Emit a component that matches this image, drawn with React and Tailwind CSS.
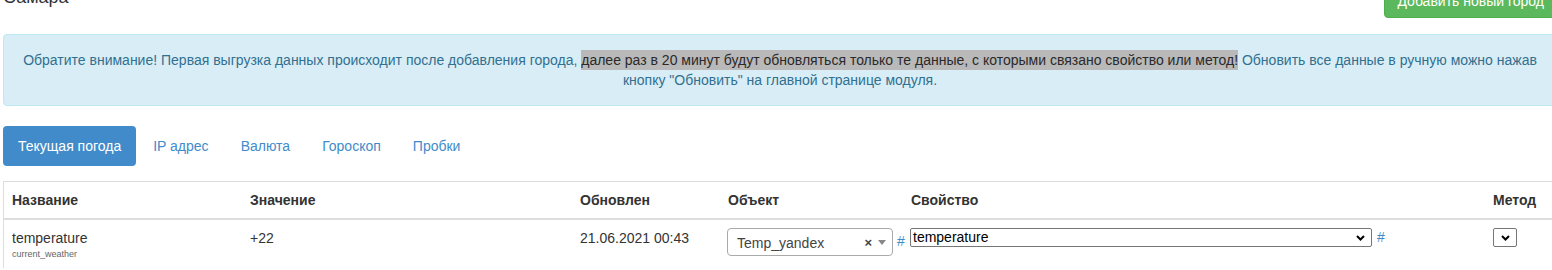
export default function App() {
  const cols = "grid grid-cols-[238px_330px_148px_183px_582px_1fr]";
  return (
    <div className="w-[1552px] h-[270px] overflow-hidden bg-white font-['Liberation_Sans',Arial,sans-serif] text-[14px] leading-[20px] text-[#333]">
      <div className="ml-[3px] w-[1554px]">
        {/* header row */}
        <div className="-mt-[16px] flex h-[34px] items-start justify-between">
          <h3 className="mt-[3px] text-[18px] leading-[20px] font-normal text-[#333]">Самара</h3>
          <button className="h-[34px] rounded-[4px] border border-[#4cae4c] bg-[#5cb85c] px-[12px] text-[14px] leading-[20px] text-white">
            Добавить новый город
          </button>
        </div>

        {/* alert */}
        <div className="mt-[16px] rounded-[4px] border border-[#bce8f1] bg-[#d9edf7] p-[15px] text-center text-[#31708f]">
          Обратите внимание! Первая выгрузка данных происходит после добавления города,{" "}
          <span className="bg-[#b9b9b9] py-[2px] text-[#2a2a2a]">
            далее раз в 20 минут будут обновляться только те данные, с которыми связано свойство или метод!
          </span>{" "}
          Обновить все данные в ручную можно нажав кнопку "Обновить" на главной странице модуля.
        </div>

        {/* tabs */}
        <ul className="mt-[20px] flex gap-[2px]">
          <li className="rounded-[4px] bg-[#428bca] px-[15px] py-[10px] text-white">Текущая погода</li>
          <li className="px-[15px] py-[10px] text-[#428bca]">IP адрес</li>
          <li className="px-[15px] py-[10px] text-[#428bca]">Валюта</li>
          <li className="px-[15px] py-[10px] text-[#428bca]">Гороскоп</li>
          <li className="px-[15px] py-[10px] text-[#428bca]">Пробки</li>
        </ul>

        {/* table */}
        <div className="mt-[15px] border-l border-t border-[#ddd]">
          <div className={`${cols} border-b-2 border-[#ddd] font-bold`}>
            <div className="p-[8px]">Название</div>
            <div className="p-[8px]">Значение</div>
            <div className="p-[8px]">Обновлен</div>
            <div className="p-[8px]">Объект</div>
            <div className="p-[8px]">Свойство</div>
            <div className="p-[8px]">Метод</div>
          </div>
          <div className={cols}>
            <div className="p-[8px]">
              <div>temperature</div>
              <div className="text-[9px] leading-[12px] text-[#666]">current_weather</div>
            </div>
            <div className="p-[8px]">+22</div>
            <div className="p-[8px]">21.06.2021 00:43</div>
            <div className="flex items-start gap-[4px] whitespace-nowrap py-[8px] pl-[7px]">
              <div className="flex h-[28px] w-[166px] shrink-0 items-center rounded-[4px] border border-[#aaa] bg-white pl-[9px] pr-[6px] text-[#444]">
                <span className="mt-[2px] flex-1">Temp_yandex</span>
                <span className="mt-[1px] text-[13px] font-bold text-[#444]">×</span>
                <svg width="8" height="5" viewBox="0 0 8 5" className="ml-[6px] mt-[1px]">
                  <path d="M0 0 L8 0 L4 5 Z" fill="#888" />
                </svg>
              </div>
              <span className="mt-[3px] text-[#428bca]">#</span>
            </div>
            <div className="flex items-start gap-[5px] py-[8px] pl-[7px]">
              <div className="flex h-[19px] w-[462px] items-center rounded-[2px] border border-[#767676] bg-white pl-[2px] pr-[6px] text-[14px] leading-[17px] text-black">
                <span className="flex-1">temperature</span>
                <svg width="9" height="6" viewBox="0 0 9 6">
                  <path d="M1 1 L4.5 4.5 L8 1" fill="none" stroke="#000" strokeWidth="2" />
                </svg>
              </div>
              <span className="-mt-[1px] text-[#428bca]">#</span>
            </div>
            <div className="py-[8px] pl-[8px]">
              <div className="flex h-[19px] w-[24px] items-center justify-center rounded-[2px] border border-[#767676] bg-white">
                <svg width="9" height="6" viewBox="0 0 9 6">
                  <path d="M1 1 L4.5 4.5 L8 1" fill="none" stroke="#000" strokeWidth="2" />
                </svg>
              </div>
            </div>
          </div>
        </div>
      </div>
    </div>
  );
}
